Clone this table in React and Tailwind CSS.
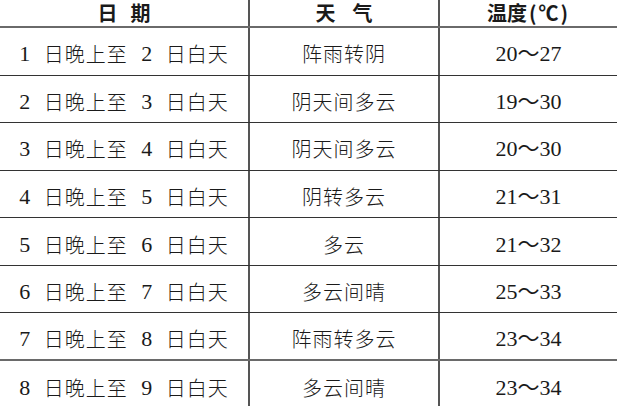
import React from "react";

const rows = [
  ["1", "2", "阵雨转阴", "20～27"],
  ["2", "3", "阴天间多云", "19～30"],
  ["3", "4", "阴天间多云", "20～30"],
  ["4", "5", "阴转多云", "21～31"],
  ["5", "6", "多云", "21～32"],
  ["6", "7", "多云间晴", "25～33"],
  ["7", "8", "阵雨转多云", "23～34"],
  ["8", "9", "多云间晴", "23～34"],
];

const serif = { fontFamily: '"Liberation Serif", "Noto Sans CJK SC", serif' };
const cjk = { fontFamily: '"Noto Sans CJK SC", sans-serif' };

export default function App() {
  return (
    <div className="w-[617px] h-[406px] overflow-hidden bg-white text-[#1a1a1a]">
      <div className="flex h-[28px] border-b-2 border-[#6a6a6a] font-bold text-[20px] leading-[26px]" style={cjk}>
        <div className="w-[250px] border-r-2 border-[#555] flex justify-center items-center gap-[13px]">
          <span>日</span>
          <span>期</span>
        </div>
        <div className="w-[190px] border-r-2 border-[#555] flex justify-center items-center gap-[17px]">
          <span>天</span>
          <span>气</span>
        </div>
        <div className="flex-1 flex justify-center items-center">
          <span>温度<span className="mx-[2px]">(</span>℃<span className="mx-[2px]">)</span></span>
        </div>
      </div>
      {rows.map((r, i) => (
        <div
          key={i}
          className={
            "flex h-[47.57px] " +
            (i === 6
              ? "border-b-2 border-[#6a6a6a]"
              : i === 7
              ? ""
              : "border-b border-[#333]")
          }
        >
          <div className="w-[250px] border-r-2 border-[#555] flex justify-center items-center gap-[13.5px] pt-[6px] leading-none">
            <span className="text-[22px]" style={serif}>{r[0]}</span>
            <span className="text-[20px] font-light tracking-[1px]" style={cjk}>日晚上至</span>
            <span className="text-[22px]" style={serif}>{r[1]}</span>
            <span className="text-[20px] font-light tracking-[1px]" style={cjk}>日白天</span>
          </div>
          <div className="w-[190px] border-r-2 border-[#555] flex justify-center items-center pt-[6px] leading-none">
            <span className="text-[20px] font-light tracking-[1px]" style={cjk}>{r[2]}</span>
          </div>
          <div className="flex-1 flex justify-center items-center pt-[6px] leading-none">
            <span className="text-[22px]" style={serif}>{r[3]}</span>
          </div>
        </div>
      ))}
    </div>
  );
}
